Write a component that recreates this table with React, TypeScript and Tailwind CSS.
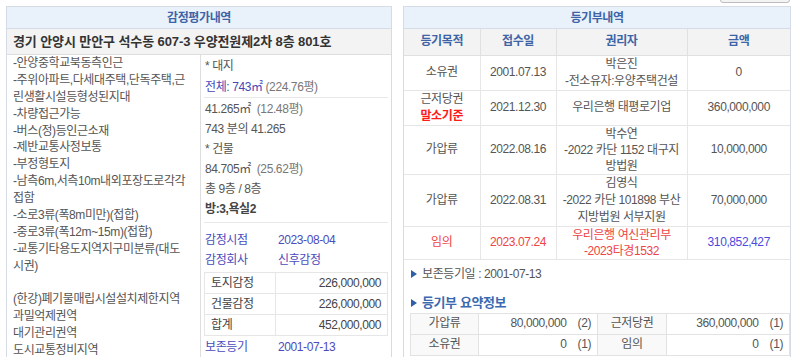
import React from "react";

const leftNotes = [
  "-안양중학교북동측인근",
  "-주위아파트,다세대주택,단독주택,근",
  "린생활시설등형성된지대",
  "-차량접근가능",
  "-버스(정)등인근소재",
  "-제반교통사정보통",
  "-부정형토지",
  "-남측6m,서측10m내외포장도로각각",
  "접함",
  "-소로3류(폭8m미만)(접합)",
  "-중로3류(폭12m~15m)(접합)",
  "-교통기타용도지역지구미분류(대도",
  "시권)",
  "",
  "(한강)폐기물매립시설설치제한지역",
  "과밀억제권역",
  "대기관리권역",
  "도시교통정비지역",
];

const appraisal = [
  ["토지감정", "226,000,000"],
  ["건물감정", "226,000,000"],
  ["합계", "452,000,000"],
];

const Triangle = () => (
  <svg width="6" height="8" viewBox="0 0 6 8" className="mr-[5px] shrink-0">
    <path d="M0 0 L6 4 L0 8 Z" fill="#2f5fa8" />
  </svg>
);

export default function App() {
  return (
    <div className="relative h-[357px] w-[800px] overflow-hidden bg-white font-['Liberation_Sans','Noto_Sans_CJK_KR',sans-serif] text-[12px] text-[#555] tracking-[-0.4px]">
      {/* button edge peeking at top right */}
      <div className="absolute right-[10px] top-[-18px] h-[21px] w-[70px] rounded-[3px] border border-[#bdbdbd] bg-[#f4f4f4]" />

      <div className="flex items-start gap-[11px] pl-[6px] pt-[6px]">
        {/* 감정평가내역 */}
        <div className="w-[386px] shrink-0 border border-[#d5dce5]">
          <div className="h-[22px] border-b border-[#d5dce5] bg-[#e9f1fb] text-center font-bold leading-[22px] text-[#3d64a6]">
            감정평가내역
          </div>
          <div className="h-[26px] border-b border-[#dedede] bg-[#f3f3f3] px-[6px] text-[13px] font-bold leading-[26px] text-[#333] tracking-[-0.1px]">
            경기 안양시 만안구 석수동 607-3 우양전원제2차 8층 801호
          </div>
          <div className="flex">
            <div className="w-[194px] shrink-0 border-r border-[#dedede] px-[6px] leading-[16.9px] whitespace-nowrap">
              {leftNotes.map((t, i) => (
                <div key={i} className="h-[16.9px]">
                  {t}
                </div>
              ))}
              <div className="h-[20px]" />
            </div>
            <div className="flex-1 px-[3px] pt-[1px] leading-[20px]">
              <div className="px-[1px]">* 대지</div>
              <div className="px-[1px] pt-[1px]">
                <span className="text-[#4747b6]">전체: 743㎡</span>{" "}
                <span className="text-[#777]">(224.76평)</span>
              </div>
              <div className="border-t border-[#e8e8e8] px-[1px] pt-[1px]">
                41.265㎡ <span className="text-[#777]">&nbsp;(12.48평)</span>
              </div>
              <div className="px-[1px]">743 분의 41.265</div>
              <div className="px-[1px]">* 건물</div>
              <div className="px-[1px]">
                84.705㎡ <span className="text-[#777]">&nbsp;(25.62평)</span>
              </div>
              <div className="px-[1px]">총 9층 / 8층</div>
              <div className="px-[1px] pb-[3px] font-bold text-[#444]">방:3,욕실2</div>
              <div className="border-t border-[#e8e8e8] pt-[7px] text-[#4b4bbd]">
                <div className="flex px-[1px]">
                  <span className="w-[73px]">감정시점</span>
                  <span>2023-08-04</span>
                </div>
                <div className="flex px-[1px]">
                  <span className="w-[73px]">감정회사</span>
                  <span>신후감정</span>
                </div>
              </div>
              <table className="mt-[2px] w-full border-collapse text-[#444]">
                <tbody>
                  {appraisal.map(([k, v]) => (
                    <tr key={k}>
                      <td className="h-[21px] w-[71px] border border-[#e6e6e6] py-0 pl-[6px] leading-[20px]">{k}</td>
                      <td className="h-[21px] border border-[#e6e6e6] py-0 pr-[6px] text-right leading-[20px]">{v}</td>
                    </tr>
                  ))}
                </tbody>
              </table>
              <div className="mt-[1px] flex px-[1px] text-[#4b4bbd]">
                <span className="w-[73px]">보존등기</span>
                <span>2001-07-13</span>
              </div>
            </div>
          </div>
        </div>

        {/* 등기부내역 */}
        <div className="w-[388px] shrink-0 border border-[#d5dce5] pb-[10px]">
          <div className="h-[22px] border-b border-[#d5dce5] bg-[#e9f1fb] text-center font-bold leading-[22px] text-[#3d64a6]">
            등기부내역
          </div>
          <table className="w-full border-collapse text-center leading-[17px]">
            <thead>
              <tr className="h-[26px] bg-[#f3f3f3] font-bold text-[#3d64a6]">
                <th className="w-[76px] border-b border-r border-[#e0e0e0]">등기목적</th>
                <th className="w-[76px] border-b border-r border-[#e0e0e0]">접수일</th>
                <th className="w-[131px] border-b border-r border-[#e0e0e0]">권리자</th>
                <th className="border-b border-[#e0e0e0]">금액</th>
              </tr>
            </thead>
            <tbody>
              <tr className="h-[33px]">
                <td className="border-b border-r border-[#e6e6e6]">소유권</td>
                <td className="border-b border-r border-[#e6e6e6]">2001.07.13</td>
                <td className="border-b border-r border-[#e6e6e6]">
                  박은진
                  <br />
                  -전소유자:우양주택건설
                </td>
                <td className="border-b border-[#e6e6e6]">0</td>
              </tr>
              <tr className="h-[33px]">
                <td className="border-b border-r border-[#e6e6e6]">
                  근저당권
                  <br />
                  <span className="font-bold text-[#ff1a1a]">말소기준</span>
                </td>
                <td className="border-b border-r border-[#e6e6e6]">2021.12.30</td>
                <td className="border-b border-r border-[#e6e6e6]">우리은행 태평로기업</td>
                <td className="border-b border-[#e6e6e6]">360,000,000</td>
              </tr>
              <tr className="h-[49px]">
                <td className="border-b border-r border-[#e6e6e6]">가압류</td>
                <td className="border-b border-r border-[#e6e6e6]">2022.08.16</td>
                <td className="border-b border-r border-[#e6e6e6] leading-[16px]">
                  박수연
                  <br />
                  -2022 카단 1152 대구지
                  <br />
                  방법원
                </td>
                <td className="border-b border-[#e6e6e6]">10,000,000</td>
              </tr>
              <tr className="h-[51px]">
                <td className="border-b border-r border-[#e6e6e6]">가압류</td>
                <td className="border-b border-r border-[#e6e6e6]">2022.08.31</td>
                <td className="border-b border-r border-[#e6e6e6]">
                  김영식
                  <br />
                  -2022 카단 101898 부산
                  <br />
                  지방법원 서부지원
                </td>
                <td className="border-b border-[#e6e6e6]">70,000,000</td>
              </tr>
              <tr className="h-[31px] text-[#ee4444]">
                <td className="border-b border-r border-[#e6e6e6]">임의</td>
                <td className="border-b border-r border-[#e6e6e6]">2023.07.24</td>
                <td className="border-b border-r border-[#e6e6e6] leading-[16px]">
                  우리은행 여신관리부
                  <br />
                  -2023타경1532
                </td>
                <td className="border-b border-[#e6e6e6] text-[#4a4ae0]">310,852,427</td>
              </tr>
            </tbody>
          </table>

          <div className="flex items-center pl-[7px] pt-[6px] leading-[16px]">
            <Triangle />
            <span>보존등기일 : 2001-07-13</span>
          </div>
          <div className="mt-[13px] flex items-center pl-[7px] text-[13px] font-bold leading-[16px] text-[#3b6ab0]">
            <Triangle />
            <span>등기부 요약정보</span>
          </div>
          <table className="ml-[6px] mt-[2px] w-[380px] border-collapse leading-[19px]">
            <tbody>
              <tr className="h-[21px]">
                <td className="w-[68px] border border-[#e2e2e2] bg-[#f9f9f9] text-center">가압류</td>
                <td className="w-[119px] border border-[#e2e2e2] pr-[6px] text-right">
                  80,000,000 <span className="ml-[8px]">(2)</span>
                </td>
                <td className="w-[69px] border border-[#e2e2e2] bg-[#f9f9f9] text-center">근저당권</td>
                <td className="border border-[#e2e2e2] pr-[6px] text-right">
                  360,000,000 <span className="ml-[8px]">(1)</span>
                </td>
              </tr>
              <tr className="h-[21px]">
                <td className="border border-[#e2e2e2] bg-[#f9f9f9] text-center">소유권</td>
                <td className="border border-[#e2e2e2] pr-[6px] text-right">
                  0 <span className="ml-[8px]">(1)</span>
                </td>
                <td className="border border-[#e2e2e2] bg-[#f9f9f9] text-center">임의</td>
                <td className="border border-[#e2e2e2] pr-[6px] text-right">
                  0 <span className="ml-[8px]">(1)</span>
                </td>
              </tr>
            </tbody>
          </table>
        </div>
      </div>
    </div>
  );
}
